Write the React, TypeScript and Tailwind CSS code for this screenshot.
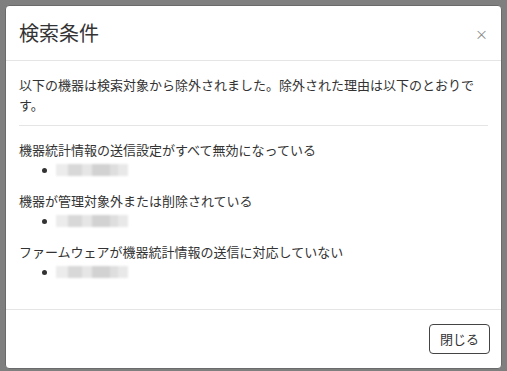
import React from 'react'

const sections = [
  '機器統計情報の送信設定がすべて無効になっている',
  '機器が管理対象外または削除されている',
  'ファームウェアが機器統計情報の送信に対応していない',
]

// ぼかしで隠された機器名
function Blurred() {
  return (
    <span className="inline-flex h-[12px] w-[72px] blur-[1px]">
      <span className="w-[12px] bg-[#ececec]" />
      <span className="w-[14px] bg-[#d8d8d8]" />
      <span className="w-[10px] bg-[#e6e6e6]" />
      <span className="w-[18px] bg-[#d2d2d2]" />
      <span className="w-[8px] bg-[#dedede]" />
      <span className="w-[10px] bg-[#e8e8e8]" />
    </span>
  )
}

export default function App() {
  return (
    <div
      className="w-[507px] h-[371px] bg-[#7f7f7f] pt-[5px] pl-[5px] overflow-hidden"
      style={{ fontFamily: '"Noto Sans CJK JP", "Noto Sans", sans-serif' }}
    >
      <div className="w-[497px] bg-white rounded-[4px] border border-[#6a6a6a] text-[#333]">
        <div className="flex items-center justify-between px-[13px] py-[14px] border-b border-[#e5e5e5]">
          <h4 className="text-[20px] leading-[26px] font-normal text-[#333]">検索条件</h4>
          <span className="text-[#888] text-[13px] leading-none">×</span>
        </div>
        <div className="px-[13px] pt-[14px] pb-[27px] text-[13px] leading-[20px]">
          <p>以下の機器は検索対象から除外されました。除外された理由は以下のとおりです。</p>
          <hr className="mt-[10px] mb-[14px] border-[#e5e5e5]" />
          <div className="flex flex-col gap-[11px]">
            {sections.map(s => (
              <div key={s}>
                <p>{s}</p>
                <div className="flex items-center h-[20px] pl-[23px] gap-[9px]">
                  <span className="w-[5px] h-[5px] rounded-full bg-[#333]" />
                  <Blurred />
                </div>
              </div>
            ))}
          </div>
        </div>
        <div className="flex justify-end px-[11px] pt-[14px] pb-[14px] border-t border-[#e5e5e5]">
          <button className="h-[30px] px-[10px] rounded-[4px] border border-[#444] text-[13px] text-[#333] bg-white">
            閉じる
          </button>
        </div>
      </div>
    </div>
  )
}
